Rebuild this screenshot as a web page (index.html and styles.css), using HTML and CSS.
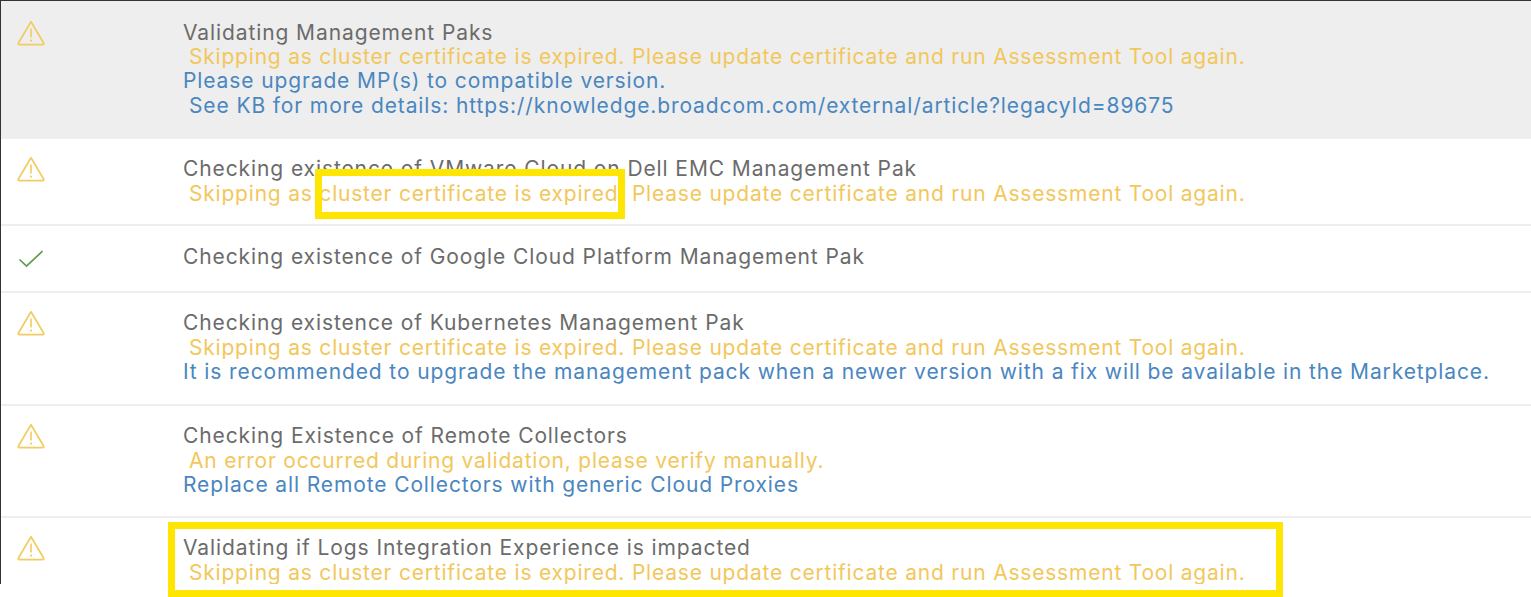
FILE: index.html
```html
<!DOCTYPE html>
<html lang="en">
<head>
<meta charset="utf-8">
<title>Assessment results</title>
<link rel="stylesheet" href="styles.css">
</head>
<body>
<svg class="defs" width="0" height="0" aria-hidden="true">
  <symbol id="warn" viewBox="0 0 28 26">
    <path d="M14 1.8 L26.6 23 Q27.2 24.6 25.6 24.6 H2.4 Q0.8 24.6 1.4 23 Z" fill="none" stroke="currentColor" stroke-width="1.7" stroke-linejoin="round"/>
    <path d="M14 8.5 V17.6" fill="none" stroke="currentColor" stroke-width="1.6"/>
    <circle cx="14" cy="20.6" r="1.1" fill="currentColor"/>
  </symbol>
  <symbol id="check" viewBox="0 0 26 18">
    <path d="M1.5 9.5 L8.5 16 L24.5 1.2" fill="none" stroke="currentColor" stroke-width="1.7"/>
  </symbol>
</svg>
<main class="list">
  <section class="row row-selected row-1">
    <div class="status"><svg class="icon-warn"><use href="#warn"/></svg></div>
    <div class="body">
      <div class="title">Validating Management Paks</div>
      <div class="warn">Skipping as cluster certificate is expired. Please update certificate and run Assessment Tool again.</div>
      <div class="info">Please upgrade MP(s) to compatible version.</div>
      <div class="info indent">See KB for more details: https://knowledge.broadcom.com/external/article?legacyId=89675</div>
    </div>
  </section>
  <section class="row row-2">
    <div class="status"><svg class="icon-warn"><use href="#warn"/></svg></div>
    <div class="body">
      <div class="title">Checking existence of VMware Cloud on Dell EMC Management Pak</div>
      <div class="warn">Skipping as cluster certificate is expired. Please update certificate and run Assessment Tool again.</div>
    </div>
    <div class="mark mark-small"></div>
  </section>
  <section class="row row-3">
    <div class="status"><svg class="icon-check"><use href="#check"/></svg></div>
    <div class="body">
      <div class="title">Checking existence of Google Cloud Platform Management Pak</div>
    </div>
  </section>
  <section class="row row-4">
    <div class="status"><svg class="icon-warn"><use href="#warn"/></svg></div>
    <div class="body">
      <div class="title">Checking existence of Kubernetes Management Pak</div>
      <div class="warn">Skipping as cluster certificate is expired. Please update certificate and run Assessment Tool again.</div>
      <div class="info">It is recommended to upgrade the management pack when a newer version with a fix will be available in the Marketplace.</div>
    </div>
  </section>
  <section class="row row-5">
    <div class="status"><svg class="icon-warn"><use href="#warn"/></svg></div>
    <div class="body">
      <div class="title">Checking Existence of Remote Collectors</div>
      <div class="warn">An error occurred during validation, please verify manually.</div>
      <div class="info">Replace all Remote Collectors with generic Cloud Proxies</div>
    </div>
  </section>
  <section class="row row-6">
    <div class="status"><svg class="icon-warn"><use href="#warn"/></svg></div>
    <div class="body">
      <div class="title">Validating if Logs Integration Experience is impacted</div>
      <div class="warn">Skipping as cluster certificate is expired. Please update certificate and run Assessment Tool again.</div>
    </div>
  </section>
</main>
<div class="mark mark-large"></div>
</body>
</html>
```
FILE: styles.css
```css
* { box-sizing: border-box; }
html, body { margin: 0; padding: 0; background: #fff; }
body {
  position: relative;
  width: 1531px;
  height: 597px;
  overflow: hidden;
  font-family: "Inter", "Noto Sans", sans-serif;
  font-size: 21px;
  line-height: 24.3px;
}
.defs { position: absolute; }
.list {
  height: 584px;
  overflow: hidden;
  border-top: 1px solid #333;
  border-left: 1px solid #333;
}
.row {
  position: relative;
  display: flex;
  border-bottom: 2px solid #eeeeee;
}
.row-selected { background: #eeeeee; }
.row-1 { height: 138px; padding-top: 19px; }
.row-2 { height: 87px; padding-top: 17.4px; }
.row-3 { height: 67px; padding-top: 18px; }
.row-4 { height: 113px; padding-top: 17.4px; }
.row-5 { height: 112px; padding-top: 17.4px; }
.row-6 { padding-top: 17.4px; border-bottom: 0; }
.status { flex: 0 0 182px; padding-left: 15.5px; line-height: 0; }
.icon-warn { width: 28px; height: 26px; color: #f2cc61; }
.icon-check { width: 26px; height: 18px; margin-top: 6px; margin-left: 1px; color: #5f9a4a; }
.body { flex: 1; padding-top: 1px; white-space: nowrap; letter-spacing: 0.79px; }
.row-1 .body { padding-top: 0.85px; }
.title { color: #6b6b6b; letter-spacing: 0.9px; }
.warn { color: #f2c75c; padding-left: 6px; }
.info { color: #4a86c0; letter-spacing: 0.88px; }
.indent { padding-left: 6px; }
.mark {
  position: absolute;
  border: 7px solid #ffe600;
}
.mark-small { left: 314px; top: 30px; width: 310px; height: 50px; }
.mark-large { left: 168px; top: 522px; width: 1115px; height: 75px; }
```
